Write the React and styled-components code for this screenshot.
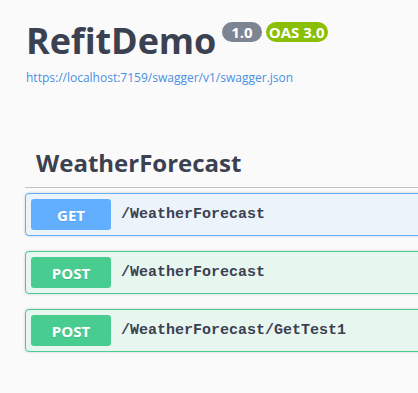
import React from "react";
import styled, { createGlobalStyle } from "styled-components";

const Global = createGlobalStyle`
  html, body { margin: 0; padding: 0; background: #fafafa; overflow: hidden; }
  body { font-family: "Open Sans", "Noto Sans", sans-serif; color: #3b4151; }
`;

const Page = styled.div`
  width: 520px;
  padding: 0 0 0 25px;
  box-sizing: border-box;
`;

const Info = styled.div`
  padding: 22px 0 0 1px;
  display: flex;
  flex-direction: column;
`;

const TitleRow = styled.div`
  display: flex;
  align-items: flex-start;
`;

const Title = styled.h2`
  margin: 1px 0 0;
  font-size: 36px;
  line-height: 36px;
  font-weight: 700;
  letter-spacing: -0.1px;
  color: #3b4151;
`;

const Badge = styled.span`
  display: inline-flex;
  align-items: center;
  height: 20px;
  margin-left: ${(p) => p.$ml}px;
  padding: 0 ${(p) => p.$pad}px;
  border-radius: 57px;
  background: ${(p) => p.$bg};
  color: #fff;
  font-size: 15px;
  font-weight: 700;
  line-height: 20px;
`;

const SpecLink = styled.a`
  margin-top: 13px;
  font-size: 12px;
  line-height: 12px;
  color: #4990e2;
  text-decoration: none;
`;

const Tag = styled.h3`
  margin: 67px 0 5px;
  padding: 0 0 12px 11px;
  font-size: 24px;
  line-height: 24px;
  font-weight: 700;
  color: #3b4151;
  border-bottom: 1px solid rgba(59, 65, 81, 0.3);
`;

const colors = {
  GET: { main: "#61affe", bg: "#ebf3fb" },
  POST: { main: "#49cc90", bg: "#e8f6f0" },
};

const OpBlock = styled.div`
  display: flex;
  align-items: center;
  margin-bottom: 15px;
  padding: 5px;
  border: 1px solid ${(p) => colors[p.$method].main};
  background: ${(p) => colors[p.$method].bg};
  border-radius: 4px;
  box-shadow: 0 0 3px rgba(0, 0, 0, 0.19);
`;

const Method = styled.span`
  width: 80px;
  height: 31px;
  display: flex;
  align-items: center;
  justify-content: center;
  border-radius: 3px;
  background: ${(p) => colors[p.$method].main};
  color: #fff;
  font-size: 15px;
  font-weight: 700;
  text-shadow: 0 1px 0 rgba(0, 0, 0, 0.1);
`;

const Path = styled.span`
  padding: 0 10px;
  font-family: "Liberation Mono", "DejaVu Sans Mono", monospace;
  font-size: 15px;
  font-weight: 700;
  color: #3b4151;
`;

const ops = [
  { method: "GET", path: "/WeatherForecast" },
  { method: "POST", path: "/WeatherForecast" },
  { method: "POST", path: "/WeatherForecast/GetTest1" },
];

export default function App() {
  return (
    <>
      <Global />
      <Page>
        <Info>
          <TitleRow>
            <Title>RefitDemo</Title>
            <Badge $bg="#7d8492" $pad={9} $ml={6}>1.0</Badge>
            <Badge $bg="#89bf04" $pad={3} $ml={4}>OAS 3.0</Badge>
          </TitleRow>
          <SpecLink href="#">https://localhost:7159/swagger/v1/swagger.json</SpecLink>
        </Info>
        <Tag>WeatherForecast</Tag>
        {ops.map((o, i) => (
          <OpBlock key={i} $method={o.method}>
            <Method $method={o.method}>{o.method}</Method>
            <Path>{o.path}</Path>
          </OpBlock>
        ))}
      </Page>
    </>
  );
}
